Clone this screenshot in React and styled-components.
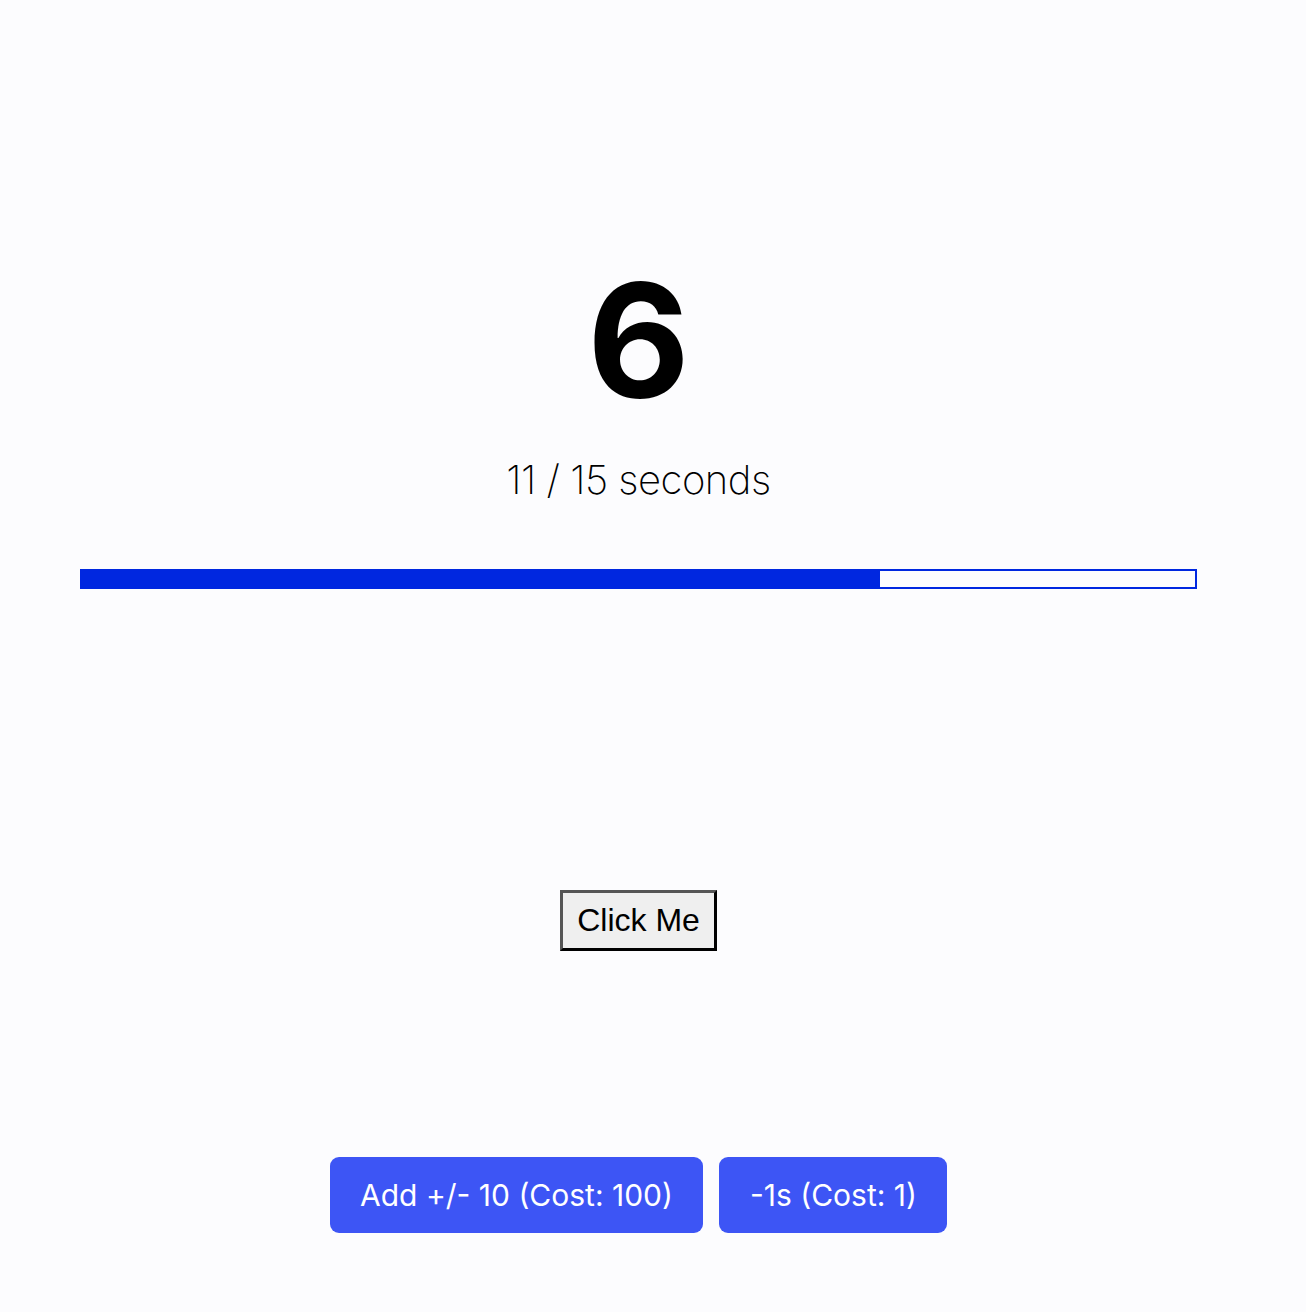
import React from "react";
import styled, { createGlobalStyle } from "styled-components";

const GlobalStyle = createGlobalStyle`
  html, body {
    margin: 0;
    padding: 0;
    background: #fcfcfe;
  }
`;

const Page = styled.div`
  width: 1277px;
  min-height: 1312px;
  display: flex;
  flex-direction: column;
  align-items: center;
  font-family: Inter, "Liberation Sans", sans-serif;
`;

const Count = styled.div`
  margin-top: 240px;
  font-family: Inter, "Liberation Sans", sans-serif;
  font-size: 158px;
  font-weight: 700;
  line-height: 200px;
  color: #000;
`;

const Seconds = styled.div`
  margin-top: 16px;
  font-size: 40px;
  font-weight: 200;
  line-height: 48px;
  color: #000;
  letter-spacing: -0.5px;
`;

const Track = styled.div`
  align-self: stretch;
  margin: 65px 80px 0;
  height: 20px;
  box-sizing: border-box;
  border: 2px solid #0027e0;
  background: #fcfcfe;
`;

const Fill = styled.div`
  height: 100%;
  margin: -2px 0 0 -2px;
  padding-bottom: 4px;
  background: #0027e0;
`;

const ClickButton = styled.button`
  margin-top: 301px;
  padding: 6px 14px;
  font-family: "Liberation Sans", Arial, sans-serif;
  font-size: 32px;
  line-height: 43px;
  color: #000;
  background: #efefef;
  border: 3px solid;
  border-color: #555 #000 #000 #555;
  cursor: pointer;
`;

const Actions = styled.div`
  margin-top: 206px;
  display: flex;
  gap: 16px;
`;

const ActionButton = styled.button`
  height: 76px;
  padding: 0 30.5px;
  font-family: Inter, "Liberation Sans", sans-serif;
  font-size: 30px;
  font-weight: 400;
  color: #fff;
  background: #3d55f5;
  border: none;
  border-radius: 9px;
  cursor: pointer;
`;

export default function App() {
  const elapsed = 11;
  const total = 15;
  const progress = 71.9;
  return (
    <Page>
      <GlobalStyle />
      <Count>6</Count>
      <Seconds>
        {elapsed} / {total} seconds
      </Seconds>
      <Track>
        <Fill style={{ width: `${progress}%` }} />
      </Track>
      <ClickButton>Click Me</ClickButton>
      <Actions>
        <ActionButton>Add +/- 10 (Cost: 100)</ActionButton>
        <ActionButton>-1s (Cost: 1)</ActionButton>
      </Actions>
    </Page>
  );
}
